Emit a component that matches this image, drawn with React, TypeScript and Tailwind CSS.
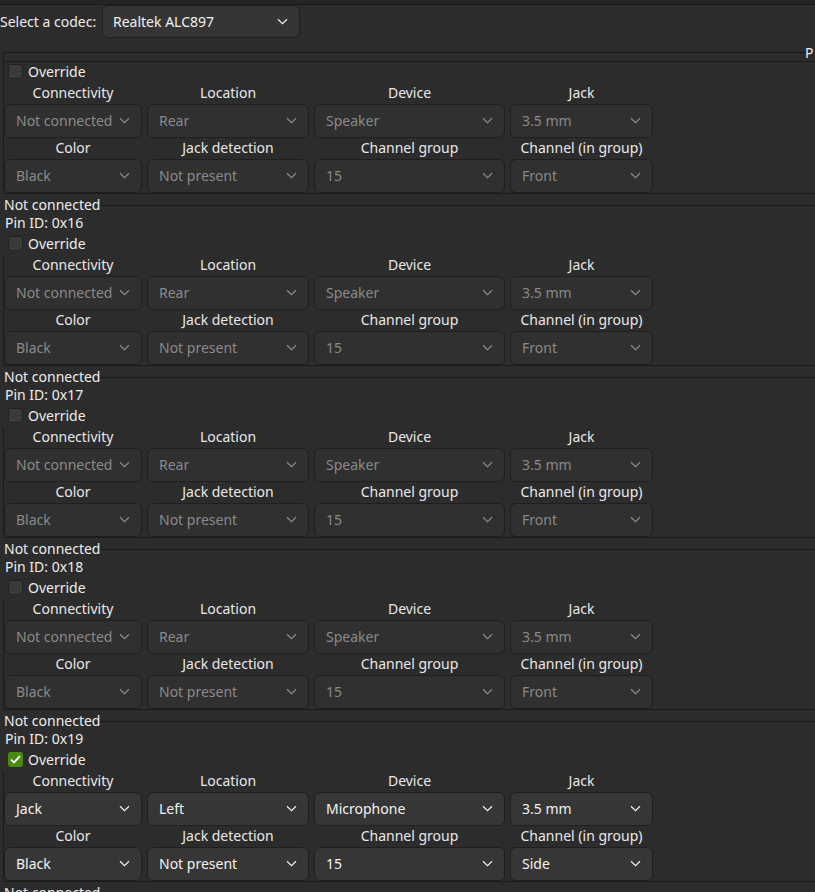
import React from "react";

type Pin = {
  label?: string;
  pin?: string;
  override: boolean;
  values: string[];
};

const off = ["Not connected", "Rear", "Speaker", "3.5 mm", "Black", "Not present", "15", "Front"];

const pins: Pin[] = [
  { override: false, values: off },
  { label: "Not connected", pin: "0x16", override: false, values: off },
  { label: "Not connected", pin: "0x17", override: false, values: off },
  { label: "Not connected", pin: "0x18", override: false, values: off },
  {
    label: "Not connected",
    pin: "0x19",
    override: true,
    values: ["Jack", "Left", "Microphone", "3.5 mm", "Black", "Not present", "15", "Side"],
  },
  { label: "Not connected", pin: "0x1a", override: false, values: off },
];

const headers = ["Connectivity", "Location", "Device", "Jack", "Color", "Jack detection", "Channel group", "Channel (in group)"];

function Chevron() {
  return (
    <svg width="11" height="7" viewBox="0 0 11 7" className="shrink-0" fill="none">
      <path d="M1 1.2 L5.5 5.6 L10 1.2" stroke="currentColor" strokeWidth="1.2" />
    </svg>
  );
}

function Combo({ value, enabled }: { value: string; enabled: boolean }) {
  return (
    <div
      className={`flex h-[34px] items-center gap-[6px] overflow-hidden rounded-[6px] border border-[#1f1f1f] pb-[2px] pl-[11px] pr-[11px] ${
        enabled ? "bg-[#363636] text-[#f2f2f2]" : "bg-[#303030] text-[#8a8a8a]"
      }`}
    >
      <span className="min-w-0 flex-1 whitespace-nowrap">{value}</span>
      <Chevron />
    </div>
  );
}

function CheckBox({ checked }: { checked: boolean }) {
  return checked ? (
    <div className="flex h-[15px] w-[15px] items-center justify-center rounded-[3px] bg-[#4a8a14]">
      <svg width="11" height="9" viewBox="0 0 11 9" fill="none">
        <path d="M1 4.6 L4 7.4 L10 1.2" stroke="#ffffff" strokeWidth="1.8" />
      </svg>
    </div>
  ) : (
    <div className="h-[15px] w-[15px] rounded-[3px] border border-[#222222] bg-[#3a3a3a]" />
  );
}

function PinGrid({ p }: { p: Pin }) {
  const rows = [0, 4];
  return (
    <div className="pl-[4px]">
      {rows.map((start) => (
        <div key={start}>
          <div className="grid h-[21px] grid-cols-[138px_162px_191px_143px] gap-x-[5px] text-[#e8e8e8]">
            {headers.slice(start, start + 4).map((h) => (
              <div key={h} className="text-center leading-[20px]">
                {h}
              </div>
            ))}
          </div>
          <div className="grid grid-cols-[138px_162px_191px_143px] gap-x-[5px]">
            {p.values.slice(start, start + 4).map((v, i) => (
              <Combo key={i} value={v} enabled={p.override} />
            ))}
          </div>
        </div>
      ))}
    </div>
  );
}

function OverrideRow({ checked, inset }: { checked: boolean; inset?: boolean }) {
  return (
    <div className={`flex h-[21px] items-center gap-[5px] pb-[2px] ${inset ? "pl-[4px]" : "pl-[8px]"}`}>
      <CheckBox checked={checked} />
      <span className="text-[#ececec]">Override</span>
    </div>
  );
}

export default function App() {
  const [first, ...rest] = pins;
  return (
    <div
      className="h-[892px] w-[815px] overflow-hidden bg-[#2c2c2c] text-[14px] text-[#ececec]"
      style={{ fontFamily: '"Noto Sans", "DejaVu Sans", sans-serif' }}
    >
      <div className="h-[5px] border-b border-[#1b1b1b] bg-[#252525]" />
      <div className="flex h-[33px] items-center">
        <span className="w-[102px] whitespace-nowrap">Select a codec:</span>
        <div className="flex h-[33px] w-[198px] items-center rounded-[6px] border border-[#1f1f1f] bg-[#353535] pl-[10px] pr-[11px] text-[#f2f2f2]">
          <span className="flex-1">Realtek ALC897</span>
          <Chevron />
        </div>
      </div>

      <div className="mt-[14px] ml-[3px] border-l border-[#1b1b1b]">
        <div className="relative h-[9px] border-t border-[#1b1b1b]">
          <span className="absolute left-[801px] top-[-10px] whitespace-nowrap leading-[20px]">P</span>
        </div>
        <div className="border-t border-[#1b1b1b]">
          <OverrideRow checked={first.override} inset />
          <div className="-ml-[4px]">
            <PinGrid p={first} />
          </div>
        </div>
      </div>
      <div className="ml-[3px] h-px bg-[#1b1b1b]" />

      {rest.map((p) => (
        <div key={p.pin}>
          <div className="flex h-[20px]">
            <span className="whitespace-nowrap pl-[4px] leading-[22px]">{p.label}</span>
            <div className="mt-[11px] h-px flex-1 bg-[#1b1b1b]" />
          </div>
          <div className="h-[20px] pl-[5px] leading-[17px]">Pin ID: {p.pin}</div>
          <OverrideRow checked={p.override} />
          <div className="ml-[3px] border-l border-[#1b1b1b]">
            <div className="-ml-[4px]">
              <PinGrid p={p} />
            </div>
          </div>
          <div className="ml-[3px] h-px bg-[#1b1b1b]" />
        </div>
      ))}
    </div>
  );
}
